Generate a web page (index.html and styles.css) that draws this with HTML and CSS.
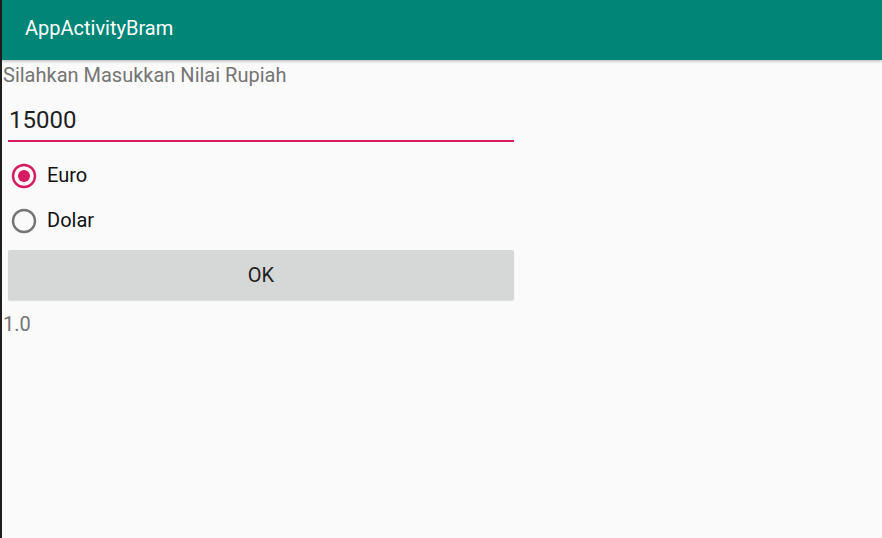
FILE: index.html
```html
<!DOCTYPE html>
<html>
<head>
<meta charset="utf-8">
<link rel="stylesheet" href="styles.css">
</head>
<body>
<div class="screen">
  <header class="appbar"><span class="title">AppActivityBram</span></header>
  <main class="content">
    <div class="label">Silahkan Masukkan Nilai Rupiah</div>
    <div class="field"><span class="value">15000</span></div>
    <div class="radios">
      <div class="radio checked">
        <svg width="28" height="28" viewBox="0 0 28 28"><circle cx="14" cy="14" r="11" fill="none" stroke="#D81B60" stroke-width="2.4"/><circle cx="14" cy="14" r="6" fill="#D81B60"/></svg>
        <span>Euro</span>
      </div>
      <div class="radio">
        <svg width="28" height="28" viewBox="0 0 28 28"><circle cx="14" cy="14" r="11" fill="none" stroke="#757575" stroke-width="2.4"/></svg>
        <span>Dolar</span>
      </div>
    </div>
    <div class="btn">OK</div>
    <div class="result">1.0</div>
  </main>
</div>
</body>
</html>
```
FILE: styles.css
```css
* { box-sizing: border-box; }
html, body { margin: 0; padding: 0; }
body {
  width: 882px;
  height: 538px;
  overflow: hidden;
  font-family: Roboto, "Noto Sans", sans-serif;
  background: #1e1e20;
}
.screen {
  margin-left: 2px;
  height: 538px;
  background: #fafafa;
  display: flex;
  flex-direction: column;
}
.appbar {
  height: 60px;
  background: #008577;
  display: flex;
  align-items: center;
  padding-left: 23px;
  padding-bottom: 4px;
  box-shadow: 0 1px 3px rgba(0,0,0,0.3);
  position: relative;
  z-index: 1;
}
.title {
  color: #ffffff;
  font-size: 20px;
}
.content {
  display: flex;
  flex-direction: column;
  padding-top: 4px;
}
.label {
  color: #757575;
  font-size: 20px;
  line-height: 22px;
  padding-left: 1px;
}
.field {
  margin: 7px 0 0 6px;
  width: 506px;
  height: 49px;
  border-bottom: 2px solid #D81B60;
  display: flex;
  align-items: center;
  padding-left: 1px;
  padding-top: 6px;
}
.value {
  font-size: 24px;
  color: #1f1f1f;
}
.radios {
  display: flex;
  flex-direction: column;
  margin-top: 11px;
}
.radio {
  display: flex;
  align-items: center;
  height: 45px;
  padding-left: 8px;
  gap: 9px;
  font-size: 20px;
  color: #111;
}
.radio span { padding-bottom: 1px; }
.btn {
  margin: 7px 0 0 6px;
  width: 506px;
  height: 50px;
  background: #d6d7d7;
  border-radius: 2px;
  box-shadow: 0 1px 1px rgba(0,0,0,0.12);
  display: flex;
  align-items: center;
  justify-content: center;
  font-size: 20px;
  color: #1f1f1f;
}
.result {
  margin-top: 13px;
  padding-left: 1px;
  color: #757575;
  font-size: 20px;
  line-height: 22px;
}
```
